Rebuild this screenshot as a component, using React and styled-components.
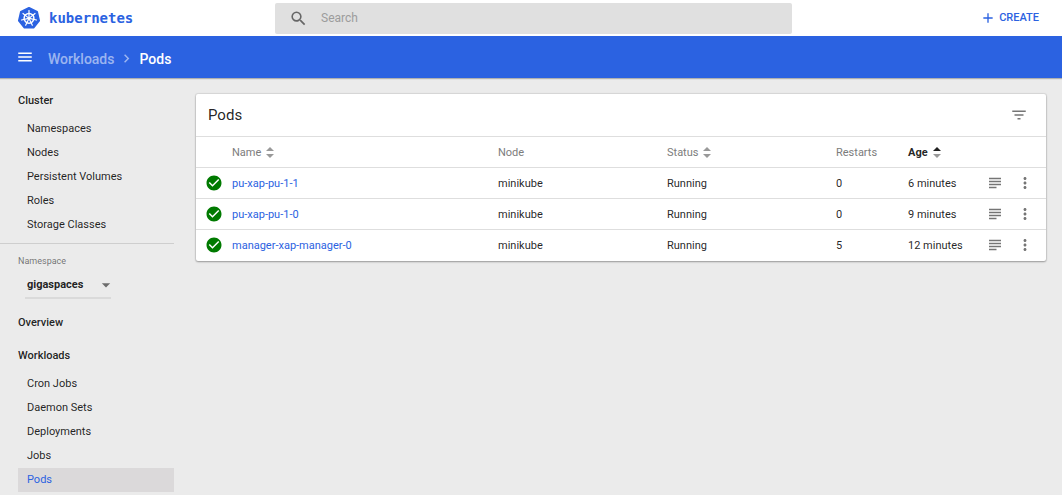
import React from "react";
import styled, { createGlobalStyle } from "styled-components";
import {
  MdSearch,
  MdAdd,
  MdMenu,
  MdChevronRight,
  MdFilterList,
  MdMoreVert,
  MdCheckCircle,
  MdArrowDropDown,
  MdSubject,
} from "react-icons/md";

const blue = "#2b62e1";
const ink = "rgba(0, 0, 0, 0.87)";
const muted = "rgba(0, 0, 0, 0.54)";

const GlobalStyle = createGlobalStyle`
  *, *::before, *::after { box-sizing: border-box; }
  body {
    margin: 0;
    background: #ebebeb;
    color: ${ink};
    font-family: Roboto, "Liberation Sans", sans-serif;
    font-size: 11px;
    line-height: 16px;
  }
  button, input, select { font: inherit; color: inherit; }
  a { color: inherit; text-decoration: none; }
  svg { display: block; flex: none; }
`;

const IconButton = styled.button`
  display: inline-flex;
  align-items: center;
  justify-content: center;
  padding: 0;
  border: 0;
  background: none;
  color: ${(p) => p.$color || muted};
  cursor: pointer;
`;

const TopBar = styled.header`
  display: grid;
  grid-template-columns: 275px minmax(0, 1fr) 270px;
  align-items: center;
  height: 36px;
  background: #fff;
`;

const Brand = styled.a`
  display: flex;
  align-items: center;
  gap: 8px;
  padding-left: 17px;
  color: ${blue};
`;

const BrandName = styled.span`
  font-family: "DejaVu Sans Mono", monospace;
  font-size: 14px;
  font-weight: 700;
`;

const SearchBox = styled.label`
  display: flex;
  align-items: center;
  gap: 13px;
  height: 31px;
  padding: 0 14px;
  border-radius: 2px;
  background: #e0e0e0;
  color: #666;
`;

const SearchInput = styled.input`
  flex: 1;
  min-width: 0;
  padding: 0;
  border: 0;
  outline: 0;
  background: none;
  font-size: 12px;
  &::placeholder {
    color: #9c9c9c;
    opacity: 1;
  }
`;

const CreateButton = styled(IconButton)`
  justify-self: end;
  gap: 3px;
  margin-right: 23px;
  font-weight: 500;
`;

const ActionBar = styled.nav`
  display: flex;
  align-items: center;
  height: 42px;
  padding: 0 16px;
  background: ${blue};
  color: #fff;
  font-size: 14px;
  font-weight: 500;
  box-shadow: 0 1px 1px rgba(0, 0, 0, 0.25);
`;

const Crumbs = styled.ol`
  display: flex;
  align-items: center;
  gap: 4px;
  margin: 3px 0 0 14px;
  padding: 0;
  list-style: none;
`;

const Crumb = styled.li`
  display: flex;
  align-items: center;
  gap: 4px;
  color: ${(p) => (p.$current ? "#fff" : "rgba(255, 255, 255, 0.54)")};
`;

const Body = styled.div`
  display: flex;
  align-items: flex-start;
`;

const Sidebar = styled.aside`
  flex: none;
  width: 174px;
  padding: 11px 0 3px;
`;

const GroupLink = styled.a`
  display: block;
  padding: 4px 18px;
  font-weight: 500;
`;

const NavList = styled.ul`
  margin: 4px 0 0;
  padding: 0 0 0 18px;
  list-style: none;
`;

const NavLink = styled.a`
  display: block;
  padding: 4px 9px;
  background: ${(p) => (p.$active ? "#dbd9da" : "none")};
  color: ${(p) => (p.$active ? blue : "inherit")};
`;

const NamespacePicker = styled.div`
  margin: 6px 0 12px;
  padding: 9px 0 0 18px;
  border-top: 1px solid #cecece;
`;

const NamespaceLabel = styled.label`
  display: block;
  color: ${muted};
  font-size: 9px;
`;

const SelectWrap = styled.div`
  display: grid;
  align-items: center;
  width: 86px;
  height: 30px;
  margin: 0 0 0 7px;
  padding-top: 3px;
  border-bottom: 2px solid #dadada;
  color: ${muted};
  > * { grid-area: 1 / 1; }
  > svg { justify-self: end; margin-right: -5px; pointer-events: none; }
`;

const Select = styled.select`
  appearance: none;
  width: 100%;
  padding: 0 0 0 2px;
  border: 0;
  background: none;
  color: ${ink};
  font-weight: 700;
`;

const Spaced = styled.div`
  margin-bottom: 9px;
`;

const Main = styled.main`
  flex: 1;
  min-width: 0;
  padding: 16px 16px 16px 22px;
`;

const Card = styled.section`
  border-radius: 2px;
  background: #fff;
  box-shadow: 0 1px 2px rgba(0, 0, 0, 0.3), 0 0 1px 1px rgba(0, 0, 0, 0.08);
`;

const CardHeader = styled.div`
  display: flex;
  align-items: center;
  justify-content: space-between;
  height: 42px;
  padding: 0 18px 0 12px;
`;

const CardTitle = styled.h1`
  margin: 0;
  font-size: 15px;
  font-weight: 400;
`;

const Table = styled.table`
  width: 100%;
  table-layout: fixed;
  border-collapse: collapse;
`;

const Col = styled.col`
  width: ${(p) => p.$width};
`;

const HeadCell = styled.th`
  height: 31px;
  padding: 2px 0 0;
  border-top: 1px solid #dedede;
  color: ${(p) => (p.$active ? ink : "#7c7c7c")};
  font-weight: ${(p) => (p.$active ? 700 : 400)};
  text-align: left;
`;

const SortButton = styled.button`
  display: flex;
  align-items: center;
  gap: 5px;
  padding: 0;
  border: 0;
  background: none;
  cursor: pointer;
`;

const Cell = styled.td`
  height: 31px;
  padding: 2px 0 0;
  border-top: 1px solid #dedede;
  white-space: nowrap;
`;

const IconCell = styled(Cell)`
  padding: 0 0 0 ${(p) => p.$inset || "0"};
  > button { vertical-align: middle; }
`;

const PodLink = styled.a`
  color: ${blue};
`;

const spokes = [0, 1, 2, 3, 4, 5, 6];

function KubernetesLogo() {
  return (
    <svg width="24" height="24" viewBox="0 0 24 24" aria-hidden="true">
      <path
        d="M12 2l8.05 3.9 1.99 8.7-5.57 7H7.53l-5.57-7 1.99-8.7z"
        fill={blue}
        stroke={blue}
        strokeWidth="2"
        strokeLinejoin="round"
      />
      <g fill="none" stroke="#fff" strokeLinecap="round">
        <circle cx="12" cy="12.3" r="4.9" strokeWidth="1.5" />
        {spokes.map((n) => (
          <path
            key={n}
            d="M12 10.8V4.6"
            strokeWidth="1.2"
            transform={`rotate(${(n * 360) / 7} 12 12.3)`}
          />
        ))}
      </g>
      <circle cx="12" cy="12.3" r="1.5" fill="#fff" />
    </svg>
  );
}

function SortArrows({ active }) {
  return (
    <svg width="8" height="12" viewBox="0 0 8 12" aria-hidden="true">
      <path d="M0 4L4 0l4 4z" fill={active ? "#212121" : "#999"} />
      <path d="M0 7h8l-4 4z" fill="#999" />
    </svg>
  );
}

const clusterLinks = ["Namespaces", "Nodes", "Persistent Volumes", "Roles", "Storage Classes"];
const workloadLinks = ["Cron Jobs", "Daemon Sets", "Deployments", "Jobs", "Pods"];

const columns = [
  { label: "Name", sortable: true },
  { label: "Node" },
  { label: "Status", sortable: true },
  { label: "Restarts" },
  { label: "Age", sortable: true, active: true },
];

const pods = [
  { name: "pu-xap-pu-1-1", node: "minikube", status: "Running", restarts: 0, age: "6 minutes" },
  { name: "pu-xap-pu-1-0", node: "minikube", status: "Running", restarts: 0, age: "9 minutes" },
  { name: "manager-xap-manager-0", node: "minikube", status: "Running", restarts: 5, age: "12 minutes" },
];

function Links({ items, active }) {
  return (
    <NavList>
      {items.map((item) => (
        <li key={item}>
          <NavLink href="#" $active={item === active}>{item}</NavLink>
        </li>
      ))}
    </NavList>
  );
}

export default function App() {
  return (
    <>
      <GlobalStyle />
      <TopBar>
        <Brand href="#">
          <KubernetesLogo />
          <BrandName>kubernetes</BrandName>
        </Brand>
        <SearchBox>
          <MdSearch size={19} />
          <SearchInput type="search" placeholder="Search" aria-label="Search" />
        </SearchBox>
        <CreateButton type="button" $color={blue}>
          <MdAdd size={16} />
          CREATE
        </CreateButton>
      </TopBar>
      <ActionBar aria-label="Breadcrumb">
        <IconButton type="button" aria-label="Menu" $color="#fff">
          <MdMenu size={18} />
        </IconButton>
        <Crumbs>
          <Crumb>
            <a href="#">Workloads</a>
            <MdChevronRight size={17} />
          </Crumb>
          <Crumb $current aria-current="page">Pods</Crumb>
        </Crumbs>
      </ActionBar>
      <Body>
        <Sidebar>
          <GroupLink href="#">Cluster</GroupLink>
          <Links items={clusterLinks} />
          <NamespacePicker>
            <NamespaceLabel htmlFor="namespace">Namespace</NamespaceLabel>
            <SelectWrap>
              <Select id="namespace" defaultValue="gigaspaces">
                <option>gigaspaces</option>
              </Select>
              <MdArrowDropDown size={20} />
            </SelectWrap>
          </NamespacePicker>
          <Spaced>
            <GroupLink href="#">Overview</GroupLink>
          </Spaced>
          <GroupLink href="#">Workloads</GroupLink>
          <Links items={workloadLinks} active="Pods" />
        </Sidebar>
        <Main>
          <Card>
            <CardHeader>
              <CardTitle>Pods</CardTitle>
              <IconButton type="button" aria-label="Filter">
                <MdFilterList size={18} />
              </IconButton>
            </CardHeader>
            <Table>
              <colgroup>
                <Col $width="36px" />
                <Col />
                <Col $width="169px" />
                <Col $width="169px" />
                <Col $width="72px" />
                <Col $width="78px" />
                <Col $width="30px" />
                <Col $width="30px" />
              </colgroup>
              <thead>
                <tr>
                  <HeadCell />
                  {columns.map(({ label, sortable, active }) => (
                    <HeadCell key={label} scope="col" $active={active}>
                      {sortable ? (
                        <SortButton type="button">
                          {label}
                          <SortArrows active={active} />
                        </SortButton>
                      ) : (
                        label
                      )}
                    </HeadCell>
                  ))}
                  <HeadCell />
                  <HeadCell />
                </tr>
              </thead>
              <tbody>
                {pods.map((pod) => (
                  <tr key={pod.name}>
                    <IconCell $inset="9px">
                      <MdCheckCircle size={18} color="#007a00" />
                    </IconCell>
                    <Cell><PodLink href="#">{pod.name}</PodLink></Cell>
                    <Cell>{pod.node}</Cell>
                    <Cell>{pod.status}</Cell>
                    <Cell>{pod.restarts}</Cell>
                    <Cell>{pod.age}</Cell>
                    <IconCell>
                      <IconButton type="button" aria-label={`Logs of ${pod.name}`}>
                        <MdSubject size={18} />
                      </IconButton>
                    </IconCell>
                    <IconCell>
                      <IconButton type="button" aria-label={`Actions for ${pod.name}`}>
                        <MdMoreVert size={18} />
                      </IconButton>
                    </IconCell>
                  </tr>
                ))}
              </tbody>
            </Table>
          </Card>
        </Main>
      </Body>
    </>
  );
}
